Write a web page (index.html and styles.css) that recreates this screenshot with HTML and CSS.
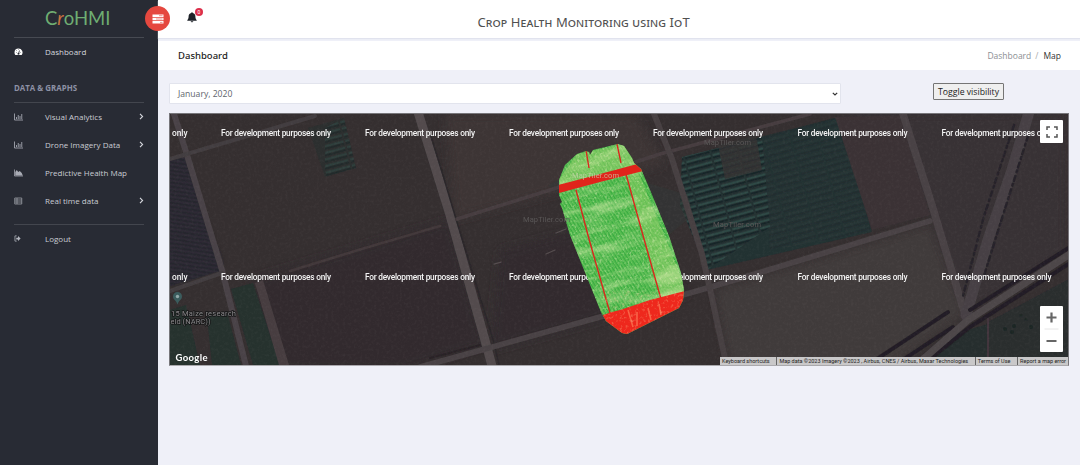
FILE: index.html
```html
<!DOCTYPE html>
<html lang="en">
<head>
<meta charset="utf-8">
<title>CroHMI - Crop Health Monitoring</title>
<link rel="stylesheet" href="styles.css">
</head>
<body>
<div class="app">
  <aside class="sidebar">
    <div class="logo"><span class="logo-text">C<i>r</i>oHMI</span></div>
    <nav>
      <a class="item first"><svg class="ico" viewBox="0 0 18 16"><path fill="#fff" d="M9 1a8 8 0 0 0-8 8c0 2 .6 3.700 1.700 5h12.600A8 8 0 0 0 9 1z"/><path d="M9 12l2-7M4 9h1M5 5l1 1M13 9h1M9 3v1" stroke="#282b34" stroke-width="1.500"/><circle cx="9" cy="11.500" r="2" fill="#282b34"/></svg><span class="w-dash">Dashboard</span></a>
      <h3>DATA &amp; GRAPHS</h3>
      <a class="item"><svg class="ico" viewBox="0 0 18 16"><path d="M1 1v13h17M5 12V8M8.500 12V4M12 12V6M15.500 12V2" fill="none" stroke="#a9acb5" stroke-width="1.700"/></svg><span>Visual Analytics</span><svg class="chev" viewBox="0 0 5 7"><path d="M1 .8l2.600 2.700L1 6.200"/></svg></a>
      <a class="item"><svg class="ico" viewBox="0 0 18 16"><path d="M1 1v13h17M5 12V8M8.500 12V4M12 12V6M15.500 12V2" fill="none" stroke="#a9acb5" stroke-width="1.700"/></svg><span>Drone Imagery Data</span><svg class="chev" viewBox="0 0 5 7"><path d="M1 .8l2.600 2.700L1 6.200"/></svg></a>
      <a class="item"><svg class="ico" viewBox="0 0 18 16"><path d="M1 1v13h17" fill="none" stroke="#a9acb5" stroke-width="1.500"/><path d="M2.500 13V6l3-4 3 4 3-2 4 4 2 5z" fill="#a9acb5"/></svg><span>Predictive Health Map</span></a>
      <a class="item"><svg class="ico" viewBox="0 0 18 16"><path d="M1.500 2h14v12h-14zM1.500 6h14M1.500 10h14M6 2v12" fill="none" stroke="#a9acb5" stroke-width="1.400"/></svg><span>Real time data</span><svg class="chev" viewBox="0 0 5 7"><path d="M1 .8l2.600 2.700L1 6.200"/></svg></a>
      <a class="item logout"><svg class="ico out" viewBox="0 0 18 16"><path d="M6 2H2v12h4" fill="none" stroke="#b4b7bf" stroke-width="1.700"/><path d="M5 6h4V2.500L15 8l-6 5.500V10H5z" fill="#b4b7bf"/></svg><span>Logout</span></a>
    </nav>
  </aside>
  <div class="main">
    <header class="topbar">
      <button class="menu" aria-label="Menu"><svg viewBox="0 0 12 10"><path fill="#fff" d="M.5.5h11v2.500H.5zM.5 3.800h11v2.500H.5zM.5 7.100h11v2.500H.5z"/><path d="M7 1.700h3.500M4 5h6.500M8 8.400h2.500" stroke="#e5483f" stroke-width=".6"/></svg></button>
      <div class="bell"><svg viewBox="0 0 10 11"><path fill="#1e2228" d="M5 .3c.5 0 .8.300.8.8 1.800.4 2.600 1.700 2.600 3.500 0 2.100.6 2.900 1.300 3.600v.6H.3v-.6C1 7.500 1.600 6.700 1.600 4.600c0-1.800.8-3.100 2.600-3.500 0-.5.300-.8.8-.8zM3.700 9.300h2.600C6.200 10.700 3.800 10.700 3.700 9.300z"/></svg><b>0</b></div>
      <h1>Crop Health Monitoring using IoT</h1>
    </header>
    <div class="crumbs"><h2>Dashboard</h2><p><span>Dashboard</span><em>/</em>Map</p></div>
    <div class="controls">
      <div class="select"><span>January, 2020</span><svg viewBox="0 0 6 4"><path d="M.8.8L3 3 5.200.8" fill="none" stroke="#333" stroke-width="1.200"/></svg></div>
      <button class="toggle">Toggle visibility</button>
    </div>
    <div class="map">
      <svg class="canvas" viewBox="170 114 899 251" preserveAspectRatio="none">
        <defs>
          <filter id="soil" x="0" y="0" width="100%" height="100%"><feTurbulence type="fractalNoise" baseFrequency=".35" numOctaves="3" seed="4"/><feColorMatrix values="0 0 0 0 .45  0 0 0 0 .4  0 0 0 0 .4  .9 0 0 0 -.38"/></filter>
          <filter id="streaks" x="0" y="0" width="100%" height="100%"><feTurbulence type="fractalNoise" baseFrequency=".022 .1" numOctaves="4" seed="6"/><feColorMatrix values="0 0 0 0 .75  0 0 0 0 .87  0 0 0 0 .45  2 0 0 0 -.85"/></filter>
          <filter id="grain" x="0" y="0" width="100%" height="100%"><feTurbulence type="fractalNoise" baseFrequency=".35" numOctaves="2" seed="2"/><feColorMatrix values="0 0 0 0 .95  0 0 0 0 .55  0 0 0 0 .3  3 0 0 0 -1.600"/></filter>
          <filter id="speck" x="0" y="0" width="100%" height="100%"><feTurbulence type="fractalNoise" baseFrequency=".4" numOctaves="2" seed="12"/><feColorMatrix values="0 0 0 0 .85  0 0 0 0 .9  0 0 0 0 .55  3 0 0 0 -1.500"/></filter>
          <filter id="soft"><feGaussianBlur stdDeviation=".6"/></filter>
          <filter id="fine"><feGaussianBlur stdDeviation=".5"/></filter>
          <filter id="softer"><feGaussianBlur stdDeviation="5"/></filter>
          <pattern id="rows" width="27" height="6.400" patternUnits="userSpaceOnUse" patternTransform="rotate(-15)"><path d="M0 1.500h25" stroke="#2f4b47" stroke-width="2"/><path d="M0 4h25" stroke="#152427" stroke-width="1.700"/></pattern>
          <pattern id="furrows" width="20" height="4" patternUnits="userSpaceOnUse" patternTransform="rotate(8)"><path d="M0 1h20" stroke="#25232b" stroke-width="1.300"/></pattern>
          <pattern id="crop" width="3" height="3" patternUnits="userSpaceOnUse" patternTransform="rotate(58)"><path d="M0 .7h3" stroke="#249b38" stroke-width="1"/><path d="M0 2.200h3" stroke="#8ad86c" stroke-width=".6"/></pattern>
          <clipPath id="plot"><path d="M586 151l3 1 1 3 3-5 25-6 6 2 8 12 2 5 7 6 9 21 19 46 12 37 3 17-1 10-4 8-52 26-5-1-16-12-5-9-31-77-8-27-2-4 2-2-3-7V180l6-15 12-11z"/></clipPath>
        </defs>
        <rect x="170" y="114" width="899" height="251" fill="#352f30"/>
        <g filter="url(#softer)">
          <path d="M445 114h190l30 50-210 55z" fill="#3c3435"/>
          <path d="M715 290l215-65 35 90-80 55H730z" fill="#413a3b"/>
          <path d="M840 114h225v140l-100 60-35-100z" fill="#393135"/>
          <path d="M250 280l200-60 35 125-80 25H270z" fill="#302b2e"/>
          <path d="M175 160l44 105-49 20z" fill="#2b2931"/>
          <path d="M500 250l100-25 90 70-200 55z" fill="#312c2e"/>
        </g>
        <g filter="url(#soft)">
          <path d="M170 160l14-5 36 116-50 15z" fill="#2d2b34"/><path d="M170 160l14-5 36 116-50 15z" fill="url(#furrows)"/>
          <path d="M682 157l157-40 33 115-165 38-27-65z" fill="#243031"/>
          <path d="M682 157l80-20 8 90-63 43-27-65z" fill="url(#rows)"/>
          <path d="M762 137l77-20 33 115-102 18z" fill="url(#rows)" opacity=".22"/>
          <path d="M718 145l38-10 6 35-37 9z" fill="#353232" opacity=".8"/>
          <path d="M835 117l65-2 30 100-58 15z" fill="#3a3235"/>
          <path d="M308 128l36-10 12 50-31 9z" fill="#29302f" opacity=".7"/><path d="M325 128l19-10 12 50-31 9z" fill="url(#rows)" opacity=".6"/>
          <path d="M231 289l22-6 27 82h-27z" fill="#26312f"/>
          <path d="M170 310l16-5 14 60h-30zM207 317l20-5 14 53h-29z" fill="#25312f"/>
          <path d="M255 283l8-3 26 85h-10z" fill="#473e40"/>
          <path d="M548 185l40-20 100 30 5 20-60 50z" fill="#343a36" opacity=".5"/>
          <path d="M990 321l79-42v86H940z" fill="#292d2f"/><path d="M920 358l40-26 28-8v41h-68z" fill="#252d2d"/>
          <g fill="none" stroke-linecap="round">
            <path d="M174 114l13 41 35 115 24 96" stroke="#494346" stroke-width="6"/>
            <path d="M170 159l145-43M170 291l52-18" stroke="#433d3f" stroke-width="4"/>
            <path d="M440 226l-75 22-75 23" stroke="#43393a" stroke-width="2.500"/>
            <path d="M418 112l32 103 38 136 4 15" stroke="#524c4e" stroke-width="9"/>
            <path d="M430 133l13 42 13 44 37 120 6 26" stroke="#2b272a" stroke-width="1.500"/>
            <path d="M457 219l93-29 110-36 150-40" stroke="#463e40" stroke-width="3.500"/>
            <path d="M420 367l65-18 115-32 90-24 55-16 185-56" stroke="#494345" stroke-width="5.500"/>
            <path d="M430 358l50-13" stroke="#292427" stroke-width="2"/>
            <path d="M654 114l18 45 30 95 10 44 15 70" stroke="#463f42" stroke-width="6"/>
            <path d="M903 114l28 88 35 116" stroke="#494245" stroke-width="7.500"/>
            <path d="M1029 112l-17 58-24 70-22 75" stroke="#464144" stroke-width="11"/>
            <path d="M1014 125l-30 91-21 80M1028 136l-19 60-27 86" stroke="#272329" stroke-width="2.500" stroke-dasharray="5 3 2 4"/>
            <path d="M1070 247l-100 63M1070 263l-100 64-50 40M868 365l80-53M895 365l58-38" stroke="#241f25" stroke-width="4"/>
            <path d="M1070 254l-102 66-55 48" stroke="#4d474a" stroke-width="7"/>
            <path d="M988 319v46" stroke="#42363c" stroke-width="2"/>
            <path d="M546 254l9-4M556 233l10-4M494 264l7-2" stroke="#554d4f" stroke-width="1.300"/>
          </g>
          <g fill="#1d2624"><circle cx="1005" cy="329" r="2"/><circle cx="1014" cy="326" r="2"/><circle cx="1021" cy="315" r="1.500"/><circle cx="1026" cy="319" r="1.500"/><circle cx="1031" cy="327" r="2"/><circle cx="1012" cy="332" r="2"/></g>
        </g>
        <rect x="170" y="114" width="899" height="251" filter="url(#soil)" opacity=".15"/>
        <g class="wm">
          <text x="172" y="135.500">only</text><text x="221" y="135.500" textLength="110">For development purposes only</text><text x="365" y="135.500" textLength="110">For development purposes only</text><text x="509" y="135.500" textLength="110">For development purposes only</text><text x="653" y="135.500" textLength="110">For development purposes only</text><text x="797.500" y="135.500" textLength="110">For development purposes only</text><text x="941.500" y="135.500" textLength="110">For development purposes only</text>
          <text x="172" y="279.500">only</text><text x="221" y="279.500" textLength="110">For development purposes only</text><text x="365" y="279.500" textLength="110">For development purposes only</text><text x="509" y="279.500" textLength="110">For development purposes only</text><text x="653" y="279.500" textLength="110">For development purposes only</text><text x="797.500" y="279.500" textLength="110">For development purposes only</text><text x="941.500" y="279.500" textLength="110">For development purposes only</text>
        </g>
        <g clip-path="url(#plot)">
          <rect x="555" y="140" width="135" height="200" fill="#4db84b"/>
          <rect x="555" y="140" width="135" height="200" fill="url(#crop)" opacity=".6"/>
          <path d="M625 172l12-3 47 115-1 9-22 6z" fill="#91cf68" opacity=".5"/>
          <path d="M560 178l17-24 48-10 14 22-79 20z" fill="#a6d873" opacity=".45"/>
          <g transform="rotate(-14 620 240)"><rect x="530" y="120" width="190" height="240" filter="url(#streaks)" opacity=".6"/></g>
          <rect x="555" y="140" width="135" height="200" filter="url(#speck)" opacity=".4"/>
          <g fill="none" stroke="#d9281d" stroke-width="1.400"><path d="M586 150l3 18M617 144l4 19M576 190l13 49 21 74M626 174l18 65 17 60"/></g>
          <path d="M558 185l31-8 52-14 2 8-43 11-41 11z" fill="#e0241b"/>
          <path d="M600 316l12-4 8-2 30-10 35-9v50h-70z" fill="#ee281d"/>
          <path d="M628 310l5 17M648 308l3 12M659 304l2 11M637 312v14" fill="none" stroke="#ff8b62" stroke-width="1.600" opacity=".6" filter="url(#fine)"/>
          <path d="M600 316l12-4 8-2 30-10 35-9v50h-70z" filter="url(#grain)" opacity=".4"/>
        </g>
        <g class="tiler"><text x="572" y="178" textLength="47" class="light">MapTiler.com</text><text x="523" y="222" textLength="47">MapTiler.com</text><text x="713" y="227" textLength="48">MapTiler.com</text><text x="704" y="145" textLength="47">MapTiler.com</text></g>
        <path d="M177.500 292a4.500 4.500 0 0 1 4.500 4.500c0 3-3 3.500-4.500 8-1.500-4.500-4.500-5-4.500-8a4.500 4.500 0 0 1 4.500-4.500z" fill="#3b5c5d"/><circle cx="177.500" cy="296.500" r="1.700" fill="#92a9a9"/>
        <g class="place"><text x="171" y="315.500" textLength="65">15 Maize research</text><text x="170.500" y="323.500" textLength="40">eld (NARC))</text></g>
        <text x="175.500" y="361" class="google" textLength="32">Google</text>
      </svg>
      <button class="ctl full" aria-label="Fullscreen"><svg viewBox="0 0 12 12"><path d="M1 4V1h3M8 1h3v3M11 8v3H8M4 11H1V8" fill="none" stroke="#555" stroke-width="1.500"/></svg></button>
      <div class="ctl zoom"><svg viewBox="0 0 22 46"><path d="M6 11.500h10M11 6.500v10M6 35h10" stroke="#666" stroke-width="2.200"/><path d="M4 23h14" stroke="#e6e6e6" stroke-width="1"/></svg></div>
      <div class="legal"><span>Keyboard shortcuts</span><span>Map data ©2023 Imagery ©2023 , Airbus, CNES / Airbus, Maxar Technologies</span><span>Terms of Use</span><span>Report a map error</span></div>
    </div>
  </div>
</div>
</body>
</html>
```
FILE: styles.css
```css
* { box-sizing: border-box; }
body { margin: 0; font-family: "Open Sans", "Noto Sans", sans-serif; }
button { font: inherit; padding: 0; margin: 0; }
.app { display: flex; width: 1080px; height: 465px; background: #eff0f8; overflow: hidden; }
.sidebar { flex: 0 0 158px; background: #282b34; color: #c9ccd3; padding: 0 14px; }
.logo { height: 38px; border-bottom: 1px solid #474a52; padding: 6px 0 0 31px; }
.logo-text { font: 400 18.500px/24px Lato, sans-serif; color: #6fae72; letter-spacing: 0; white-space: nowrap; }
.logo-text i { color: #c87440; }
.item { display: flex; align-items: center; height: 28.100px; font-size: 8px; white-space: nowrap; }
.item.first { color: #d5d8df; height: 27px; }
.ico { width: 9px; height: 8px; margin-right: 22px; }
.ico.out { width: 8px; height: 7px; margin-right: 23px; }
.chev { width: 5px; height: 7px; margin-left: auto; fill: none; stroke: #d5d7dc; stroke-width: 1.100; }
h3 { margin: 15px 0 0; height: 22.500px; border-bottom: 1px solid #43464e; font: 700 7.900px/17px "Open Sans", sans-serif; color: #8d91a5; }
.logout { margin-top: 9px; border-top: 1px solid #43464e; }
.main { flex: 1; min-width: 0; }
.topbar { position: relative; height: 38px; background: #fff; box-shadow: 0 1px 1px #e1e3ee; }
.menu { position: absolute; left: -13px; top: 6px; width: 25px; height: 25px; border: 0; border-radius: 50%; background: #e5483f; display: grid; place-items: center; }
.menu svg { width: 12px; height: 10px; }
.bell { position: absolute; left: 29px; top: 12px; width: 10px; height: 11px; }
.bell svg { display: block; width: 10px; height: 11px; }
.bell b { position: absolute; left: 8px; top: -4px; width: 8px; height: 8px; border-radius: 50%; background: #dc2f4b; color: #fff; font: 5px/8px Roboto, sans-serif; text-align: center; }
h1 { margin: 0; padding-left: 319.500px; font: 400 13px/44px "Noto Sans", sans-serif; font-variant: small-caps; letter-spacing: .1px; color: #505050; white-space: nowrap; }
.crumbs { display: flex; align-items: center; justify-content: space-between; height: 29px; margin-top: 3px; padding: 0 19px 0 20px; background: #fff; font-size: 8.500px; color: #333; }
h2 { margin: 0; font: 500 9.500px/28px "Noto Sans", sans-serif; color: #222; }
.crumbs p { margin: 0; }
.crumbs span { color: #8b8e93; }
.crumbs em { color: #aaa; margin: 0 5px 0 4px; font-style: normal; }
.controls { display: flex; align-items: flex-start; padding: 13px 0 0 11px; height: 43px; }
.select { display: flex; align-items: center; justify-content: space-between; width: 672px; height: 21px; padding: 0 2px 0 8px; background: #fff; border: 1px solid #e2e4ed; border-radius: 1px; font-size: 8.600px; color: #60656c; }
.select svg { width: 6px; height: 4px; }
.toggle { margin-left: 92px; width: 71px; height: 17px; border: 1px solid #757575; border-radius: 1px; background: #efefef; font-size: 8.700px; line-height: 14px; color: #222; white-space: nowrap; }
.map { position: relative; margin-left: 11px; width: 900px; height: 253px; border: 1px solid #77767a; border-bottom-color: #aaa9ad; overflow: hidden; }
.canvas { display: block; width: 899px; height: 251px; }
.wm { font: 500 8.300px Roboto, sans-serif; fill: #f4f4f4; }
.tiler { font: 7.500px Roboto, sans-serif; fill: #5a5757; }
.tiler .light { fill: #c9d3ad; opacity: .75; }
.place { font: 7.500px Roboto, sans-serif; fill: #8b898b; stroke: #151617; stroke-width: 1.500px; paint-order: stroke; }
.google { font: 700 9.500px Lato, sans-serif; fill: #fff; }
.ctl { position: absolute; right: 5px; width: 23px; background: #fff; border: 0; border-radius: 1px; }
.full { top: 6px; height: 23px; display: grid; place-items: center; }
.full svg { width: 12px; height: 12px; }
.zoom { top: 192px; height: 46px; }
.zoom svg { display: block; width: 23px; height: 46px; }
.legal { position: absolute; right: 0; bottom: 0; width: 348px; height: 8px; display: flex; justify-content: space-between; background: #c9c8c9; font: 5.500px/8px Roboto, sans-serif; color: #222; white-space: nowrap; }
.legal span { padding: 0 2px; }
.legal span + span { border-left: 1px solid #666; }
```
